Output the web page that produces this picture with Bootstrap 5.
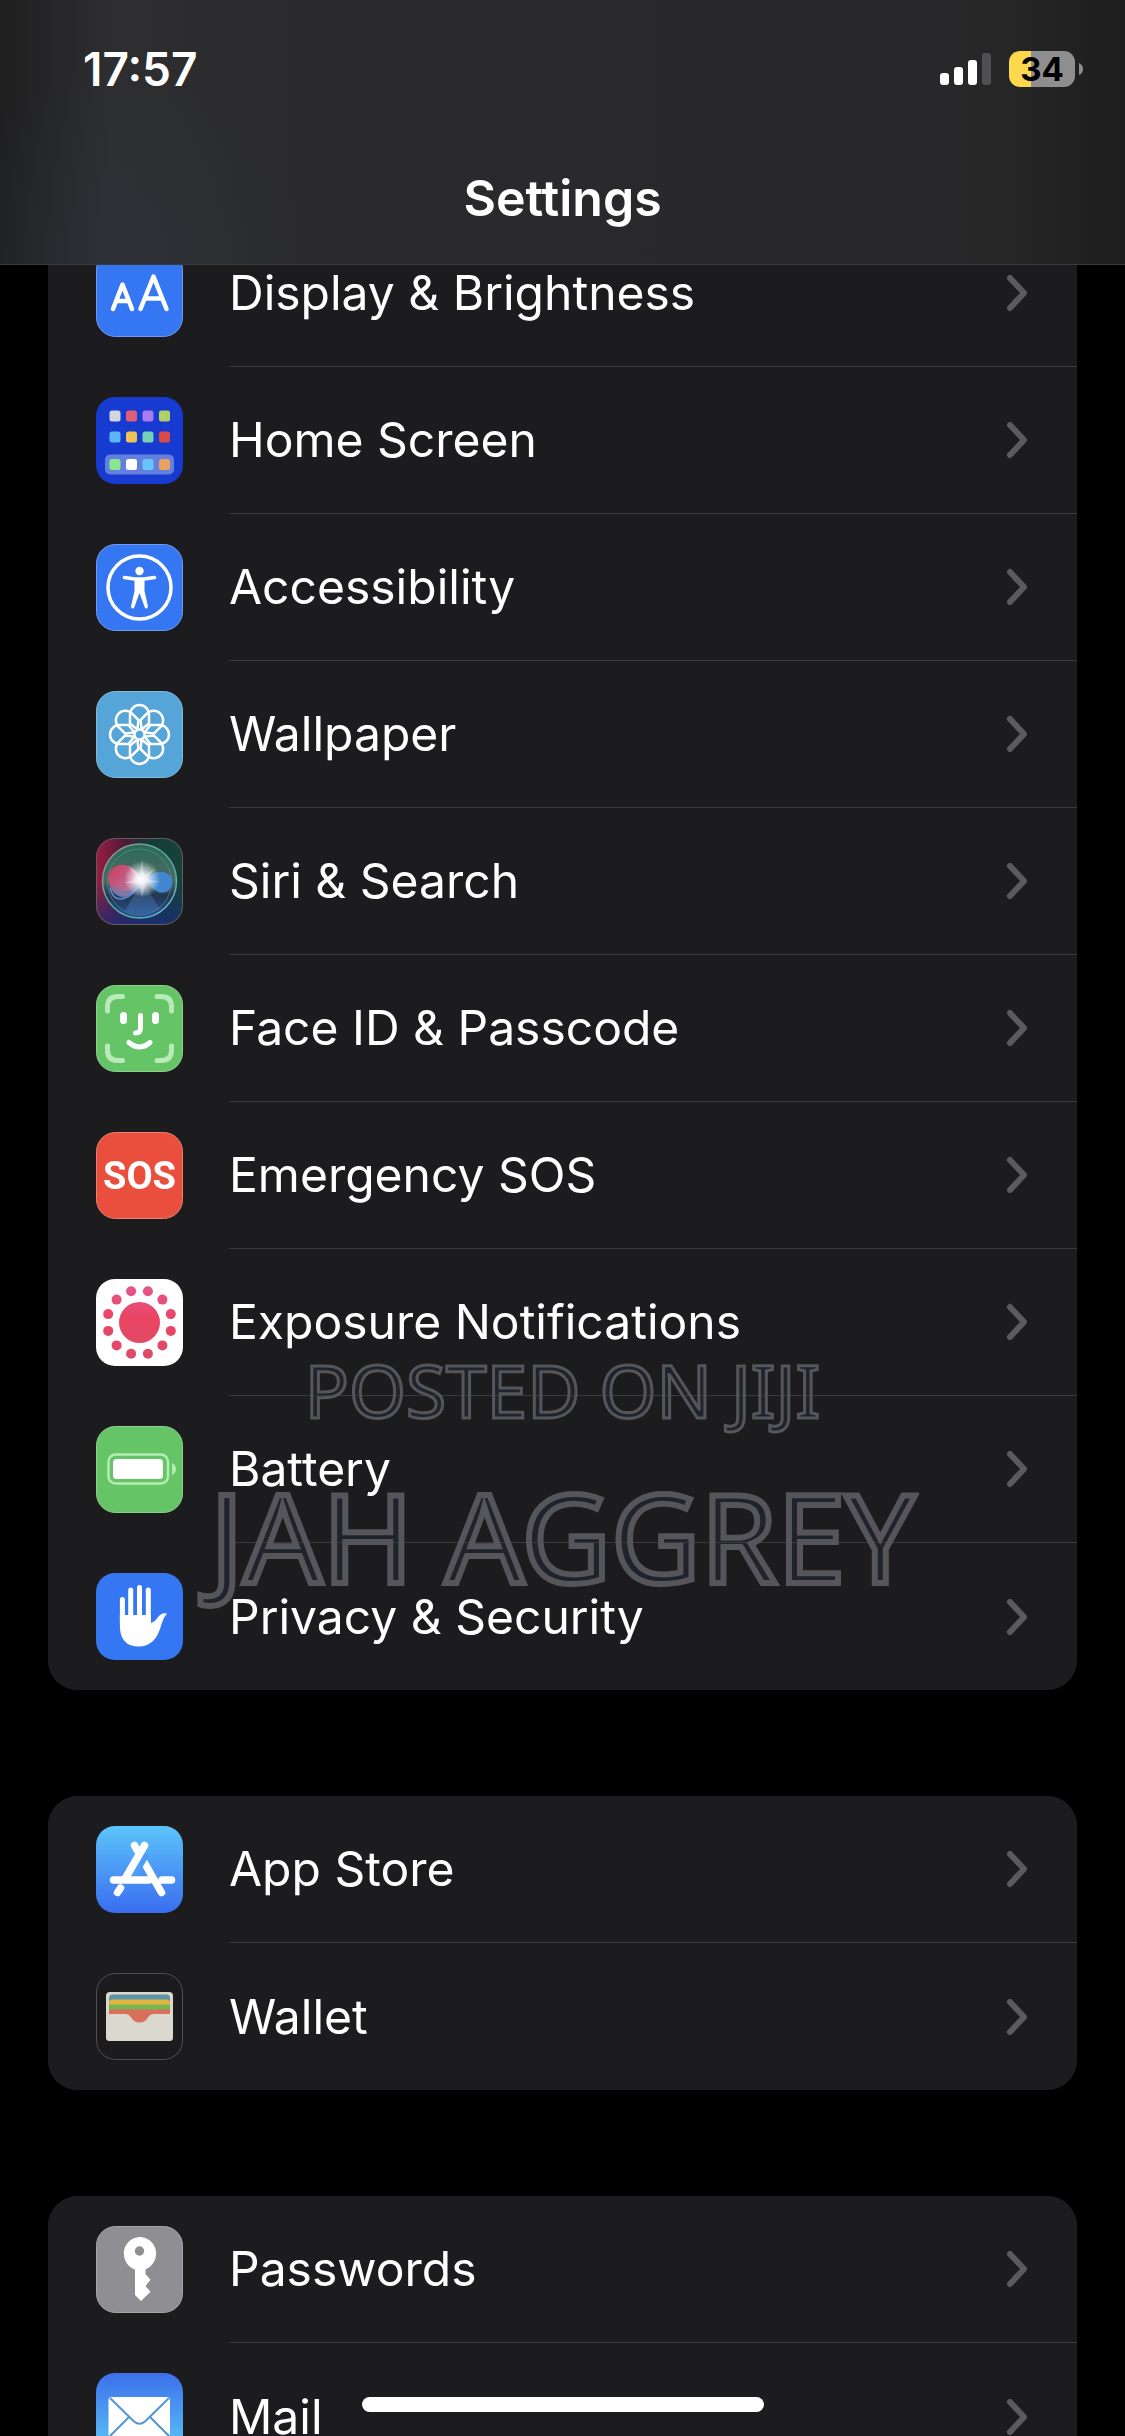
<!DOCTYPE html>
<html lang="en">
<head>
<meta charset="utf-8">
<meta name="viewport" content="width=device-width, initial-scale=1">
<title>Settings</title>
<link href="https://cdn.jsdelivr.net/npm/bootstrap@5.3.0/dist/css/bootstrap.min.css" rel="stylesheet">
<style>
  body { background: #000; color: #fff; font-family: Inter, Roboto, sans-serif; }
  .top-panel {
    height: 265px; z-index: 1030;
    border-bottom: 1px solid #3a3a3c;
    background:
      radial-gradient(ellipse 180px 200px at 120px 265px, rgba(44,54,66,.4), transparent),
      linear-gradient(90deg, #1f1f20, #2e2e30 110px, #2a2a2c 300px, #29292b 900px, #262627 1010px, #1d1d1e);
  }
  .status-row { height: 138px; padding: 0 42px 0 83px; }
  .clock { font-size: 46px; line-height: 46px; font-weight: 600; }
  .battery-pill {
    width: 66px; height: 36px; border-radius: 11px;
    background: linear-gradient(90deg, #fbd84e 22px, #8e8e8f 22px);
    color: #000; font-size: 33px; line-height: 36px; font-weight: 700;
  }
  .page-title { font-size: 50px; line-height: 60px; font-weight: 600; padding-top: 30px; }
  .settings-list { padding: 220px 48px 0; gap: 106px; }
  .group-card { --bs-list-group-bg: #1c1c1e; --bs-list-group-color: #fff; --bs-list-group-border-width: 0; --bs-list-group-border-radius: 30px; background: #1c1c1e; border-radius: 30px; }
  .setting { height: 147px; padding: 0 0 0 48px; gap: 46px; }
  .setting .tile { width: 87px; height: 87px; flex: none; }
  .setting-body { padding-right: 49px; border-bottom: 1px solid #3a3a3c; font-size: 48px; line-height: 60px; }
  .setting:last-child .setting-body { border-bottom: 0; }
  .stamp { top: 1338px; left: 0; right: 0; z-index: 1020; mix-blend-mode: lighten; pointer-events: none;
    font-family: "Noto Sans", "Open Sans", sans-serif; color: #1f232b; -webkit-text-stroke-color: #55555a; }
  .stamp-site { font-size: 73px; line-height: 104px; -webkit-text-stroke-width: 3px; }
  .stamp-name { font-size: 123px; line-height: 188px; -webkit-text-stroke-width: 6px; }
  .home-bar { width: 402px; height: 15px; bottom: 24px; z-index: 1040; }
</style>
<script src="https://cdn.jsdelivr.net/npm/bootstrap@5.3.0/dist/js/bootstrap.bundle.min.js"></script>
</head>
<body>
<svg width="0" height="0" class="position-absolute" aria-hidden="true">
  <defs>
    <symbol id="chevron" viewBox="0 0 22 38"><path d="M4 4 18 19 4 34" fill="none" stroke="#5b5b5f" stroke-width="6" stroke-linecap="round" stroke-linejoin="round"/></symbol>
    <path id="petal" d="M-9.500-20A9.500 9.500 0 0 1 9.500-20V-11L2-5H-2L-9.500-11Z"/>
    <linearGradient id="gStore" x2="0" y2="1"><stop stop-color="#5cc4fa"/><stop offset="1" stop-color="#3a6df0"/></linearGradient>
    <linearGradient id="gMail" x2="0" y2="1"><stop stop-color="#3c70ea"/><stop offset="1" stop-color="#5ed0fb"/></linearGradient>
    <linearGradient id="gExp" gradientUnits="userSpaceOnUse" x1="0" y1="6" x2="0" y2="80"><stop stop-color="#e2588f"/><stop offset=".45" stop-color="#ea4462"/><stop offset="1" stop-color="#dc4c68"/></linearGradient>
    <linearGradient id="gSiri"><stop stop-color="#9c1d42"/><stop offset=".35" stop-color="#4a1b38"/><stop offset=".6" stop-color="#143c38"/><stop offset="1" stop-color="#164338"/></linearGradient>
    <linearGradient id="gSiriLow" x2="0" y2="1"><stop offset=".5" stop-color="#16306a" stop-opacity="0"/><stop offset="1" stop-color="#1b2c78" stop-opacity=".85"/></linearGradient>
    <linearGradient id="gOrb" x2="0" y2="1"><stop stop-color="#2a6b54"/><stop offset=".5" stop-color="#4b6a66"/><stop offset=".7" stop-color="#213650"/><stop offset="1" stop-color="#28569c"/></linearGradient>
    <linearGradient id="gRim" x2="1" y2="1"><stop stop-color="#a58c94"/><stop offset=".5" stop-color="#4fae98"/><stop offset="1" stop-color="#6db4dc"/></linearGradient>
    <radialGradient id="gGlow"><stop stop-color="#fff"/><stop offset=".3" stop-color="#fff" stop-opacity=".85"/><stop offset="1" stop-color="#fff" stop-opacity="0"/></radialGradient>
    <linearGradient id="gPink" x2="1" y2="1"><stop stop-color="#e0325e"/><stop offset="1" stop-color="#b790b4"/></linearGradient>
  </defs>
</svg>

<div class="vh-100 overflow-hidden position-relative">
  <header class="top-panel position-absolute top-0 start-0 end-0">
    <div class="status-row d-flex align-items-center justify-content-between">
      <span class="clock">17:57</span>
      <div class="d-flex align-items-center">
        <svg class="me-3" width="53" height="34" viewBox="0 0 53 34" role="img" aria-label="Signal"><g fill="#fff"><rect y="21" width="9" height="12" rx="3"/><rect x="14" y="15" width="9" height="18" rx="3"/><rect x="28" y="8" width="9" height="25" rx="3"/></g><rect x="42" y="1" width="9" height="32" rx="3" fill="#505052"/></svg>
        <span class="battery-pill text-center">34</span>
        <svg class="ms-1" width="4" height="14" viewBox="0 0 4 14"><path d="M0 1Q4 3 4 7T0 13Z" fill="#8e8e8f"/></svg>
      </div>
    </div>
    <h1 class="page-title text-center m-0">Settings</h1>
  </header>

  <main class="settings-list d-flex flex-column">
    <div class="list-group group-card">
      <a href="#" class="list-group-item setting d-flex align-items-center">
        <svg class="tile" viewBox="0 0 87 87"><rect x=".5" y=".5" width="86" height="86" rx="19" fill="#3577f3" stroke="#6f9cf0"/><g fill="none" stroke="#fff" stroke-width="4.500" stroke-linecap="round" stroke-linejoin="round"><path d="M17 59 26.500 34.500 36 59M20.500 51H32.500M44.500 59 57.500 26.500 70.500 59M49 48.500H66"/></g></svg>
        <span class="setting-body flex-grow-1 align-self-stretch d-flex align-items-center justify-content-between">Display &amp; Brightness<svg width="22" height="38"><use href="#chevron"/></svg></span>
      </a>
      <a href="#" class="list-group-item setting d-flex align-items-center">
        <svg class="tile" viewBox="0 0 87 87"><rect width="87" height="87" rx="19" fill="#173bd0"/><rect x="9" y="57.500" width="69" height="20" rx="5" fill="#6480df"/><g><rect x="13.500" y="13.500" width="11" height="11" rx="2.500" fill="#d5d5dc"/><rect x="30" y="13.500" width="11" height="11" rx="2.500" fill="#df5f76"/><rect x="46.500" y="13.500" width="11" height="11" rx="2.500" fill="#a87bf3"/><rect x="63" y="13.500" width="11" height="11" rx="2.500" fill="#b3d068"/><rect x="13.500" y="34.500" width="11" height="11" rx="2.500" fill="#5cb6fa"/><rect x="30" y="34.500" width="11" height="11" rx="2.500" fill="#efc255"/><rect x="46.500" y="34.500" width="11" height="11" rx="2.500" fill="#76d2b6"/><rect x="63" y="34.500" width="11" height="11" rx="2.500" fill="#dc4a48"/><rect x="13.500" y="62" width="11" height="11" rx="2.500" fill="#88e78c"/><rect x="30" y="62" width="11" height="11" rx="2.500" fill="#fff"/><rect x="46.500" y="62" width="11" height="11" rx="2.500" fill="#66c5fb"/><rect x="63" y="62" width="11" height="11" rx="2.500" fill="#eaa263"/></g></svg>
        <span class="setting-body flex-grow-1 align-self-stretch d-flex align-items-center justify-content-between">Home Screen<svg width="22" height="38"><use href="#chevron"/></svg></span>
      </a>
      <a href="#" class="list-group-item setting d-flex align-items-center">
        <svg class="tile" viewBox="0 0 87 87"><rect x=".5" y=".5" width="86" height="86" rx="19" fill="#3577f3" stroke="#6f9cf0"/><circle cx="43.500" cy="43.500" r="31.500" fill="none" stroke="#fff" stroke-width="3.500"/><circle cx="43.500" cy="27" r="4.200" fill="#fff"/><path d="M28.500 33.500 39 35H48L58.500 33.500" fill="none" stroke="#fff" stroke-width="3.600" stroke-linecap="round" stroke-linejoin="round"/><path d="M38.500 34H48.500V47L52 62.500Q51.500 65.500 49 64L43.500 49 38 64Q35.500 65.500 35 62.500L38.500 47Z" fill="#fff"/></svg>
        <span class="setting-body flex-grow-1 align-self-stretch d-flex align-items-center justify-content-between">Accessibility<svg width="22" height="38"><use href="#chevron"/></svg></span>
      </a>
      <a href="#" class="list-group-item setting d-flex align-items-center">
        <svg class="tile" viewBox="0 0 87 87"><rect x=".5" y=".5" width="86" height="86" rx="19" fill="#55a5d9" stroke="#83b9dc"/><g transform="translate(43.500 43.500)" fill="none" stroke="#fff" stroke-width="2.500" stroke-linejoin="round"><use href="#petal"/><use href="#petal" transform="rotate(45)"/><use href="#petal" transform="rotate(90)"/><use href="#petal" transform="rotate(135)"/><use href="#petal" transform="rotate(180)"/><use href="#petal" transform="rotate(225)"/><use href="#petal" transform="rotate(270)"/><use href="#petal" transform="rotate(315)"/></g></svg>
        <span class="setting-body flex-grow-1 align-self-stretch d-flex align-items-center justify-content-between">Wallpaper<svg width="22" height="38"><use href="#chevron"/></svg></span>
      </a>
      <a href="#" class="list-group-item setting d-flex align-items-center">
        <svg class="tile" viewBox="0 0 87 87"><rect width="87" height="87" rx="19" fill="url(#gSiri)"/><rect x=".5" y=".5" width="86" height="86" rx="19" fill="url(#gSiriLow)" stroke="#6a5a62"/><circle cx="43.500" cy="43" r="37" fill="url(#gOrb)" stroke="url(#gRim)" stroke-width="1.500"/><ellipse cx="43.500" cy="44" rx="32" ry="33" fill="none" stroke="#5fa493" stroke-width="1" opacity=".5"/><path d="M46 42C40 30 31 26 23 27 14 29 11 37 13 45 15 55 24 61 32 58 40 55 44 48 46 42Z" fill="url(#gPink)" opacity=".9"/><path d="M14 46C16 58 28 64 36 57 42 52 44 47 46 43 36 46 34 62 14 46Z" fill="#5680b8" opacity=".6"/><path d="M14 50C18 67 34 64 46 43" fill="none" stroke="#5b8ed0" stroke-width="1.500"/><path d="M50 43C56 34 64 32 70 35 79 39 78 51 70 54 62 57 56 50 50 43Z" fill="#4286ce"/><path d="M46 43 29 73Q43 80 64 71Z" fill="#5a91d4" opacity=".3"/><circle cx="46" cy="41" r="18" fill="url(#gGlow)"/><path d="M46 20 48 38 59 30 51 41 65 44 50 45 46 59 43 46 28 45 41 40 32 27 44 37Z" fill="#fff" opacity=".3"/></svg>
        <span class="setting-body flex-grow-1 align-self-stretch d-flex align-items-center justify-content-between">Siri &amp; Search<svg width="22" height="38"><use href="#chevron"/></svg></span>
      </a>
      <a href="#" class="list-group-item setting d-flex align-items-center">
        <svg class="tile" viewBox="0 0 87 87"><rect x=".5" y=".5" width="86" height="86" rx="19" fill="#65c466" stroke="#8fd08f"/><path d="M11.500 26V22Q11.500 11.500 22 11.500H26.500M61 11.500H65Q75.500 11.500 75.500 22V26M75.500 61V65Q75.500 75.500 65 75.500H61M26.500 75.500H22Q11.500 75.500 11.500 65V61" fill="none" stroke="#b9eab9" stroke-width="5" stroke-linecap="round"/><g fill="none" stroke="#fff" stroke-linecap="round"><path d="M27.500 30.500V35.500M59.500 30.500V35.500" stroke-width="7"/><path d="M44.500 30.500V43Q44.500 48 39.500 48M33 57.500Q43.500 66.500 54 57.500" stroke-width="5"/></g></svg>
        <span class="setting-body flex-grow-1 align-self-stretch d-flex align-items-center justify-content-between">Face ID &amp; Passcode<svg width="22" height="38"><use href="#chevron"/></svg></span>
      </a>
      <a href="#" class="list-group-item setting d-flex align-items-center">
        <svg class="tile" viewBox="0 0 87 87"><rect x=".5" y=".5" width="86" height="86" rx="19" fill="#ea4e3d" stroke="#e68275"/><text x="43.500" y="57" text-anchor="middle" font-family="Roboto, sans-serif" font-weight="700" font-size="38" fill="#fff">SOS</text></svg>
        <span class="setting-body flex-grow-1 align-self-stretch d-flex align-items-center justify-content-between">Emergency SOS<svg width="22" height="38"><use href="#chevron"/></svg></span>
      </a>
      <a href="#" class="list-group-item setting d-flex align-items-center">
        <svg class="tile" viewBox="0 0 87 87"><rect width="87" height="87" rx="19" fill="#fff"/><g fill="url(#gExp)"><circle cx="43.500" cy="43.500" r="20.500"/><circle cx="35.100" cy="12.200" r="5"/><circle cx="51.900" cy="12.200" r="5"/><circle cx="20.600" cy="20.600" r="5"/><circle cx="66.400" cy="20.600" r="5"/><circle cx="12.200" cy="35.100" r="5"/><circle cx="74.800" cy="35.100" r="5"/><circle cx="12.200" cy="51.900" r="5"/><circle cx="74.800" cy="51.900" r="5"/><circle cx="20.600" cy="66.400" r="5"/><circle cx="66.400" cy="66.400" r="5"/><circle cx="35.100" cy="74.800" r="5"/><circle cx="51.900" cy="74.800" r="5"/></g></svg>
        <span class="setting-body flex-grow-1 align-self-stretch d-flex align-items-center justify-content-between">Exposure Notifications<svg width="22" height="38"><use href="#chevron"/></svg></span>
      </a>
      <a href="#" class="list-group-item setting d-flex align-items-center">
        <svg class="tile" viewBox="0 0 87 87"><rect x=".5" y=".5" width="86" height="86" rx="19" fill="#65c466" stroke="#8fd08f"/><rect x="12.500" y="28.500" width="59.500" height="29" rx="7" fill="none" stroke="#b4ecb2" stroke-width="2.500"/><rect x="17" y="33" width="50" height="20" rx="3.500" fill="#fff"/><path d="M76 37Q80 39 80 43T76 49Z" fill="#b4ecb2"/></svg>
        <span class="setting-body flex-grow-1 align-self-stretch d-flex align-items-center justify-content-between">Battery<svg width="22" height="38"><use href="#chevron"/></svg></span>
      </a>
      <a href="#" class="list-group-item setting d-flex align-items-center">
        <svg class="tile" viewBox="0 0 87 87"><rect width="87" height="87" rx="19" fill="#3577f3"/><path d="M26.400 26.500V50M34.700 17V50M43.500 14.500V50M52.300 17V50" fill="none" stroke="#fff" stroke-width="5" stroke-linecap="round"/><path d="M23.900 42H54.800V50Q59 49 62 44 65.500 39 71 40.500 67 45 65.500 51 60 73.500 43 73.500 24 73.500 23.900 53Z" fill="#fff"/></svg>
        <span class="setting-body flex-grow-1 align-self-stretch d-flex align-items-center justify-content-between">Privacy &amp; Security<svg width="22" height="38"><use href="#chevron"/></svg></span>
      </a>
    </div>

    <div class="list-group group-card">
      <a href="#" class="list-group-item setting d-flex align-items-center">
        <svg class="tile" viewBox="0 0 87 87"><rect width="87" height="87" rx="19" fill="url(#gStore)"/><g fill="none" stroke-linecap="round"><path d="M38.500 19.500 65.500 66.500" stroke="#fff" stroke-width="7.500"/><path d="M48.500 27 33 53.500" stroke="#4f9df7" stroke-width="11" stroke-linecap="butt"/><path d="M48.500 19.500 29.500 52M21.500 66.500 24.500 62" stroke="#fff" stroke-width="7.500"/><path d="M17.500 54H53M66 54H75.500" stroke="#fff" stroke-width="7.500"/></g></svg>
        <span class="setting-body flex-grow-1 align-self-stretch d-flex align-items-center justify-content-between">App Store<svg width="22" height="38"><use href="#chevron"/></svg></span>
      </a>
      <a href="#" class="list-group-item setting d-flex align-items-center">
        <svg class="tile" viewBox="0 0 87 87"><rect x=".5" y=".5" width="86" height="86" rx="19" fill="#1c1c1e" stroke="#505053"/><rect x="10" y="19" width="67" height="49" rx="4" fill="#dbd9ce"/><path d="M13 41V25Q13 21.500 16.500 21.500H70.500Q74 21.500 74 25V41Z" fill="#5d94ab"/><path d="M13 41V30Q13 26.500 16.500 26.500H70.500Q74 26.500 74 30V41Z" fill="#e0b43f"/><path d="M13 31.500H74V41H13Z" fill="#78b551"/><path d="M13 36.500H74V42H13Z" fill="#d9705c"/><path d="M10 41H30Q33 41 35 44.500 38 49.500 43.500 49.500T52 44.500Q54 41 57 41H77V64Q77 68 73 68H14Q10 68 10 64Z" fill="#dbd9ce"/><path d="M30 41Q33 41 35 44.500 38 49.500 43.500 49.500T52 44.500Q54 41 57 41Z" fill="#d9705c"/></svg>
        <span class="setting-body flex-grow-1 align-self-stretch d-flex align-items-center justify-content-between">Wallet<svg width="22" height="38"><use href="#chevron"/></svg></span>
      </a>
    </div>

    <div class="list-group group-card">
      <a href="#" class="list-group-item setting d-flex align-items-center">
        <svg class="tile" viewBox="0 0 87 87"><rect x=".5" y=".5" width="86" height="86" rx="19" fill="#8e8e93" stroke="#a5a5a9"/><path fill="#fff" fill-rule="evenodd" d="M43.500 11A16.500 16.700 0 0 1 49.500 43.300V48L54.500 53.700 49.500 60 54.500 65.700 45 75 39 69V43.500A16.500 16.700 0 0 1 43.500 11ZM43.500 20.300A4.700 4.700 0 1 0 43.500 29.700 4.700 4.700 0 1 0 43.500 20.300Z"/></svg>
        <span class="setting-body flex-grow-1 align-self-stretch d-flex align-items-center justify-content-between">Passwords<svg width="22" height="38"><use href="#chevron"/></svg></span>
      </a>
      <a href="#" class="list-group-item setting d-flex align-items-center">
        <svg class="tile" viewBox="0 0 87 87"><rect width="87" height="87" rx="19" fill="url(#gMail)"/><rect x="12.500" y="24" width="61.500" height="39.500" rx="3" fill="#fff"/><path d="M14 25 38 48.500Q43.500 53 49 48.500L73 25M14 63 33 44M73 63 54 44" fill="none" stroke="#4f95d8" stroke-width="2"/></svg>
        <span class="setting-body flex-grow-1 align-self-stretch d-flex align-items-center justify-content-between">Mail<svg width="22" height="38"><use href="#chevron"/></svg></span>
      </a>
    </div>
  </main>

  <div class="stamp position-absolute text-center">
    <div class="stamp-site">POSTED ON JIJI</div>
    <div class="stamp-name">JAH AGGREY</div>
  </div>
  <div class="home-bar position-absolute start-50 translate-middle-x bg-white rounded-pill"></div>
</div>
</body>
</html>
